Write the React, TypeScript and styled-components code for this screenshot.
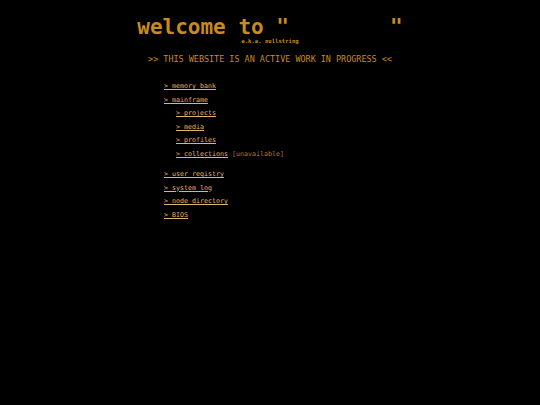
import React from 'react'
import styled, { createGlobalStyle } from 'styled-components'

const GlobalStyle = createGlobalStyle`
  html, body {
    margin: 0;
    padding: 0;
    background: #000;
    height: 100%;
  }
  body {
    font-family: "DejaVu Sans Mono", "Liberation Mono", monospace;
  }
`

const Page = styled.div`
  width: 540px;
  height: 405px;
  background: #000;
  display: flex;
  justify-content: center;
`

const Column = styled.div`
  width: 266px;
  padding-top: 14px;
  display: flex;
  flex-direction: column;
`

const Title = styled.h1`
  margin: 0;
  font-size: 21px;
  line-height: 26px;
  font-weight: bold;
  color: #c98a1f;
  text-align: center;
  white-space: pre;
`

const Aka = styled.div`
  font-size: 5.6px;
  line-height: 8px;
  font-weight: bold;
  color: #c98a1f;
  text-align: center;
  margin-top: -3px;
`

const Notice = styled.div`
  font-size: 8.45px;
  line-height: 12px;
  color: #c98a1f;
  text-align: center;
  margin-top: 8px;
  white-space: pre;
`

const Menu = styled.ul`
  list-style: none;
  margin: 15px 0 0 0;
  padding: 0 0 0 27px;
`

const Item = styled.li<{ $depth?: number; $gap?: boolean }>`
  font-size: 6.65px;
  line-height: 13.5px;
  padding-left: ${({ $depth }) => ($depth ? $depth * 12 : 0)}px;
  margin-top: ${({ $gap }) => ($gap ? 7 : 0)}px;
  white-space: pre;
`

const Link = styled.a`
  color: #e0b469;
  text-decoration: underline;
`

const Note = styled.span`
  color: #b07a30;
`

const items = [
  { label: 'memory bank' },
  { label: 'mainframe' },
  { label: 'projects', depth: 1 },
  { label: 'media', depth: 1 },
  { label: 'profiles', depth: 1 },
  { label: 'collections', depth: 1, note: '[unavailable]' },
  { label: 'user registry', gap: true },
  { label: 'system log' },
  { label: 'node directory' },
  { label: 'BIOS' },
]

export default function App() {
  return (
    <>
      <GlobalStyle />
      <Page>
        <Column>
          <Title>{'welcome to "        "'}</Title>
          <Aka>a.k.a. nullstring</Aka>
          <Notice>{'>> THIS WEBSITE IS AN ACTIVE WORK IN PROGRESS <<'}</Notice>
          <Menu>
            {items.map((it) => (
              <Item key={it.label} $depth={it.depth} $gap={it.gap}>
                <Link href="#">{'> ' + it.label}</Link>
                {it.note && <Note>{' ' + it.note}</Note>}
              </Item>
            ))}
          </Menu>
        </Column>
      </Page>
    </>
  )
}
